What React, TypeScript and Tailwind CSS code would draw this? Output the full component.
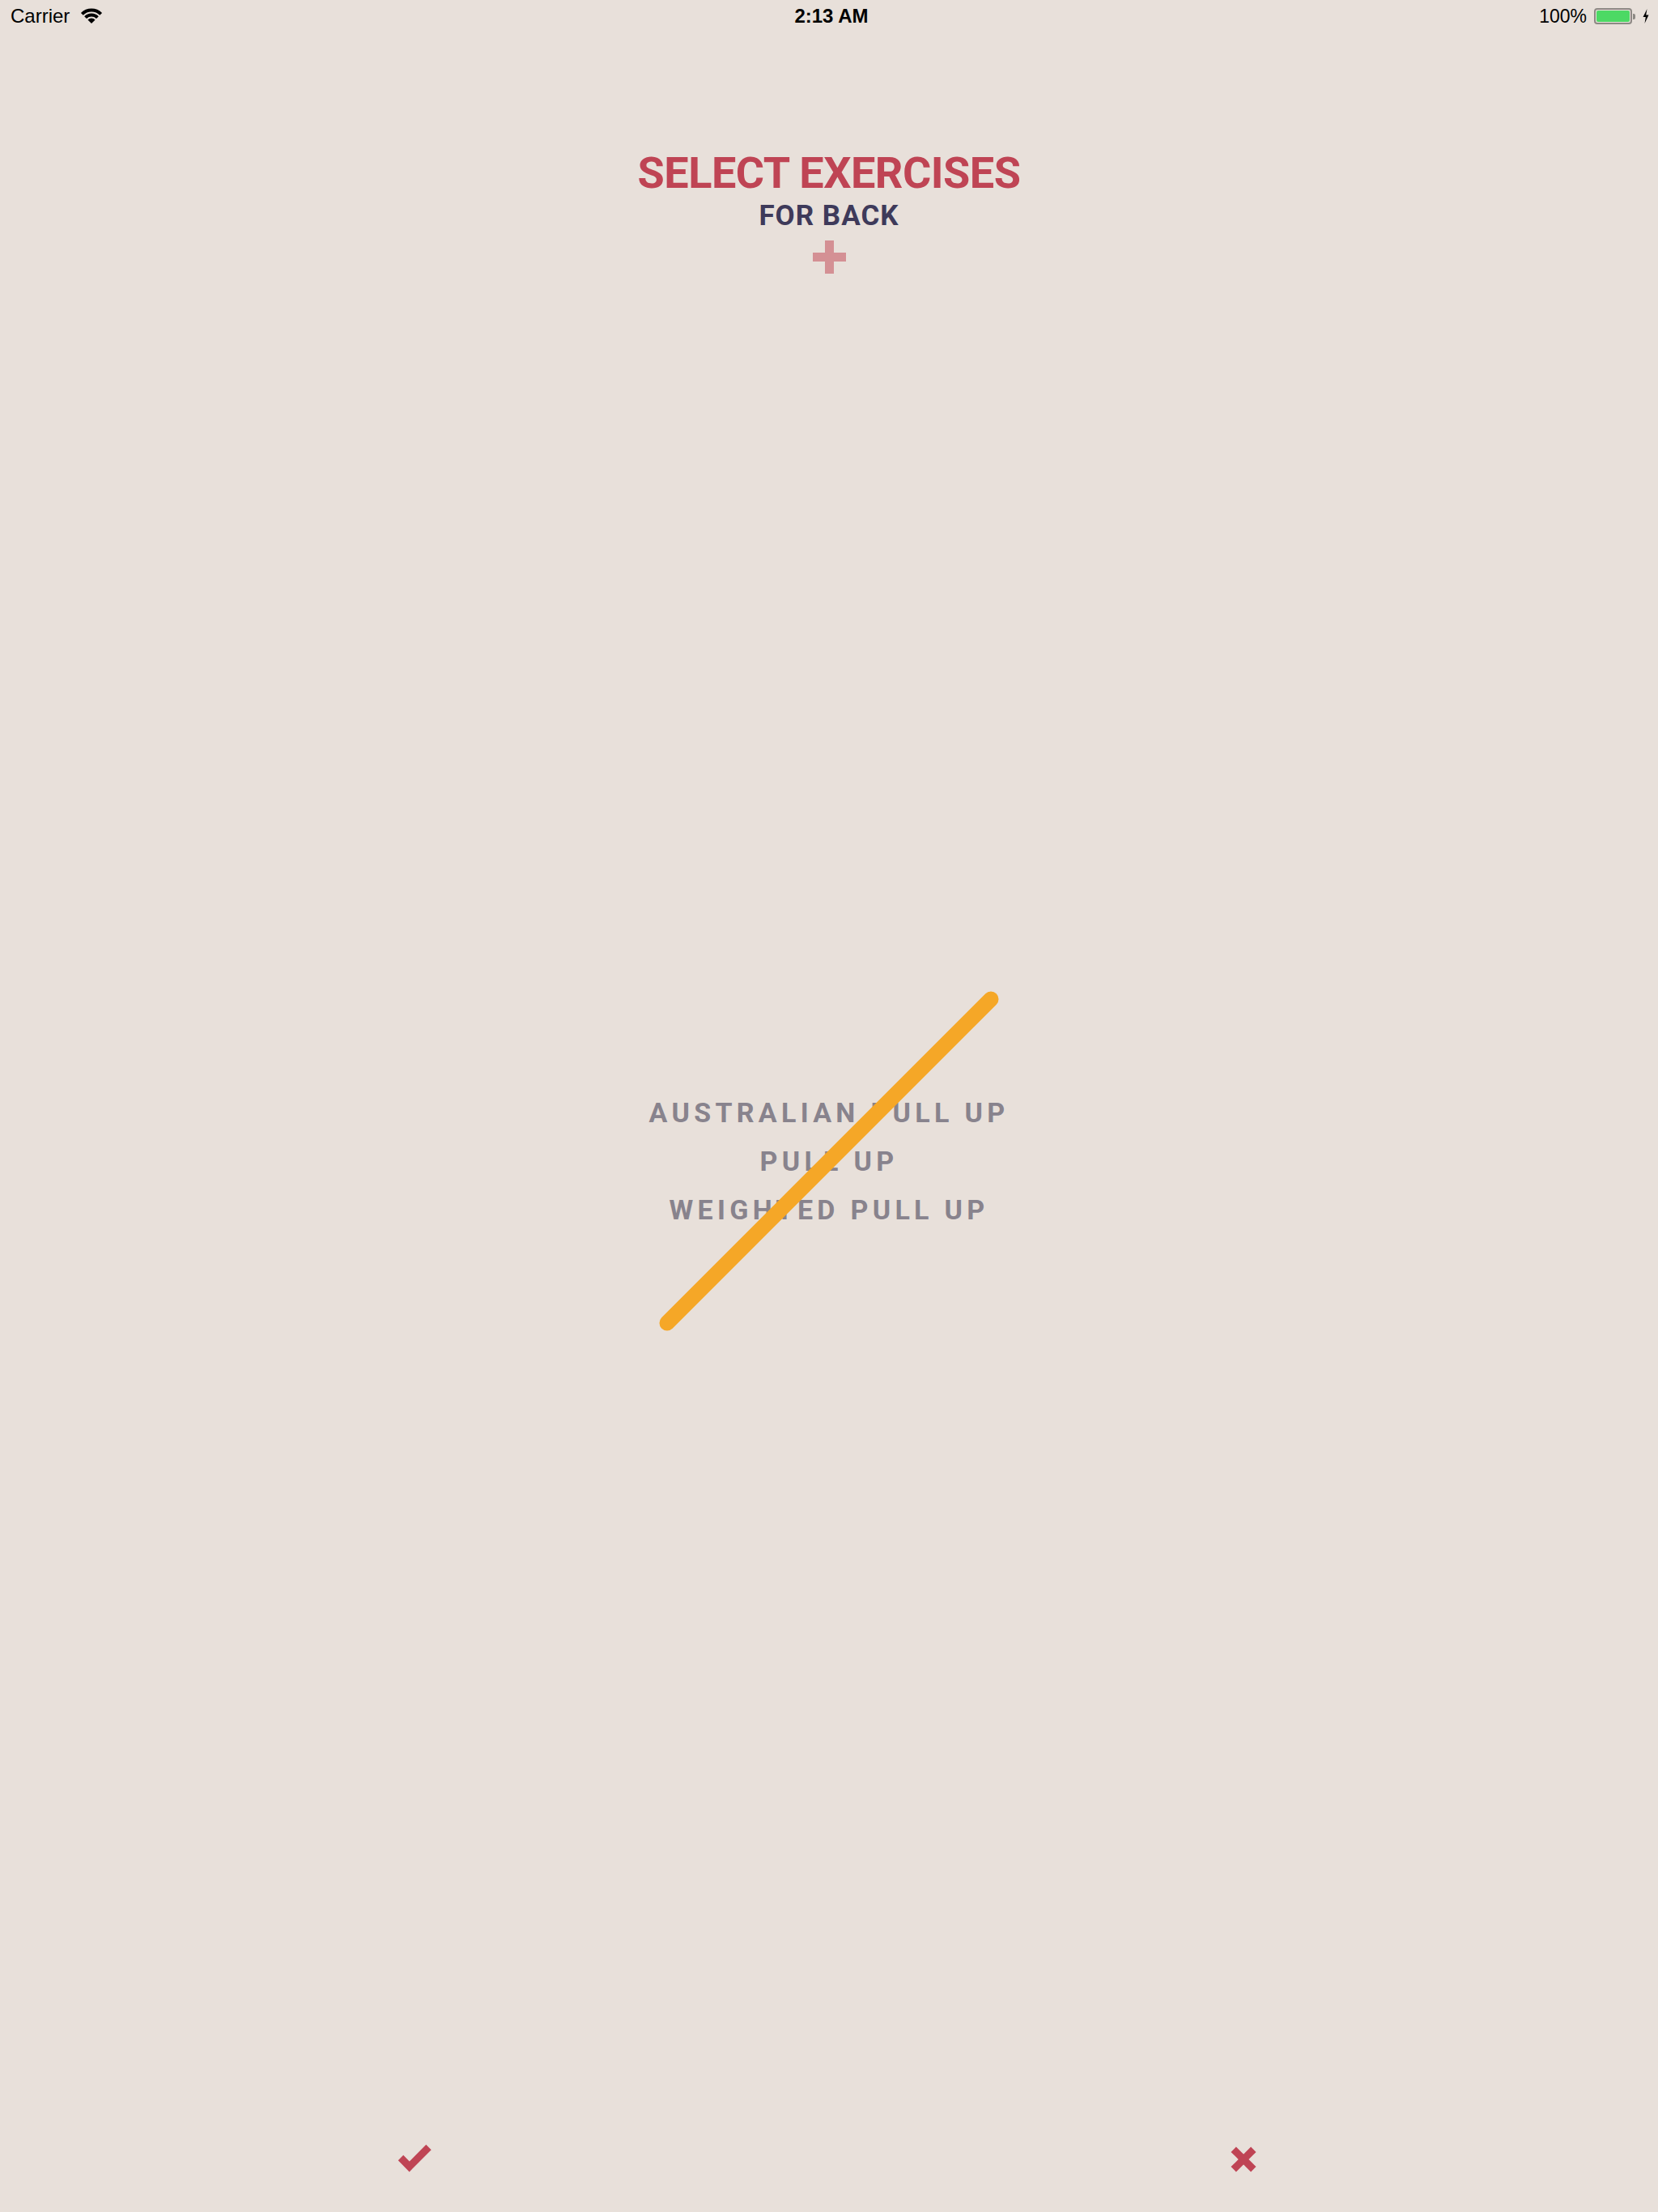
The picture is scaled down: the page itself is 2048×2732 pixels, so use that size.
import React from "react";

const exercises = ["AUSTRALIAN PULL UP", "PULL UP", "WEIGHTED PULL UP"];

function Wifi() {
  return (
    <svg width="28" height="20" viewBox="0 0 28 20" className="ml-[13px]">
      <path d="M2.33 7.33 A16.5 16.5 0 0 1 25.67 7.33" fill="none" stroke="#000" strokeWidth="4" />
      <path d="M6.58 11.58 A10.5 10.5 0 0 1 21.42 11.58" fill="none" stroke="#000" strokeWidth="4" />
      <path d="M14 19 L9.4 14.4 A6.5 6.5 0 0 1 18.6 14.4 Z" fill="#000" />
    </svg>
  );
}

function Battery() {
  return (
    <div className="flex items-center ml-[9px]">
      <div className="w-[47px] h-[20px] rounded-[4px] border-[2px] border-[#8d8984] p-[1px]">
        <div className="w-full h-full rounded-[2px] bg-[#4cd964]" />
      </div>
      <div className="w-[3px] h-[7px] rounded-r-[2px] bg-[#8d8984] ml-[1px]" />
      <svg width="8" height="18" viewBox="0 0 8 18" className="ml-[9px]">
        <path d="M5.5 0 L0.5 10 L3.8 10 L2.5 18 L7.5 7.5 L4.2 7.5 Z" fill="#000" />
      </svg>
    </div>
  );
}

export default function App() {
  return (
    <div className="h-[2732px] w-full flex flex-col bg-[#e8e0da] font-['Roboto',sans-serif]">
      {/* status bar */}
      <div className="h-[40px] grid grid-cols-3 items-center text-[24px] leading-[40px] text-black font-['Liberation_Sans',sans-serif]">
        <div className="flex items-center pl-[13px]">
          <span>Carrier</span>
          <Wifi />
        </div>
        <div className="text-center font-bold pl-[6px]">2:13 AM</div>
        <div className="flex items-center justify-end pr-[11px]">
          <span className="text-[23px]">100%</span>
          <Battery />
        </div>
      </div>

      {/* header */}
      <div className="flex flex-col items-center pt-[147px]">
        <h1 className="text-[54px] leading-[54px] font-bold text-[#bf4454] tracking-[-0.5px]">
          SELECT EXERCISES
        </h1>
        <h2 className="mt-[8px] text-[35px] leading-[35px] font-bold text-[#3e3a5a] tracking-[1px]">
          FOR BACK
        </h2>
        <button className="mt-[13px]">
          <svg width="41" height="41" viewBox="0 0 41 41" className="block">
            <rect x="15" y="0" width="11" height="41" fill="#d49094" />
            <rect x="0" y="15" width="41" height="11" fill="#d49094" />
          </svg>
        </button>
      </div>

      {/* exercise list */}
      <div className="flex-1 flex items-center justify-center pb-[72px]">
        <div className="relative w-[480px]">
          <ul className="flex flex-col items-center">
            {exercises.map((name) => (
              <li
                key={name}
                className="text-[34px] leading-[60px] font-bold text-[#88838d] tracking-[5.3px]"
              >
                {name}
              </li>
            ))}
          </ul>
          <svg
            width="480"
            height="430"
            viewBox="0 0 480 430"
            className="absolute left-0 top-[-125px] pointer-events-none"
          >
            <line x1="40" y1="415" x2="440" y2="15" stroke="#f5a727" strokeWidth="19" strokeLinecap="round" />
          </svg>
        </div>
      </div>

      {/* footer */}
      <div className="h-[130px] grid grid-cols-2">
        <button className="flex items-center justify-center">
          <svg width="50" height="45" viewBox="0 0 50 45" className="block">
            <polyline points="8,20 18.7,31 42.5,7" fill="none" stroke="#bf4454" strokeWidth="9" />
          </svg>
        </button>
        <button className="flex items-center justify-center">
          <svg width="40" height="40" viewBox="0 0 40 40" className="block">
            <line x1="7.7" y1="7.7" x2="32.3" y2="32.3" stroke="#bf4454" strokeWidth="9" />
            <line x1="32.3" y1="7.7" x2="7.7" y2="32.3" stroke="#bf4454" strokeWidth="9" />
          </svg>
        </button>
      </div>
    </div>
  );
}
